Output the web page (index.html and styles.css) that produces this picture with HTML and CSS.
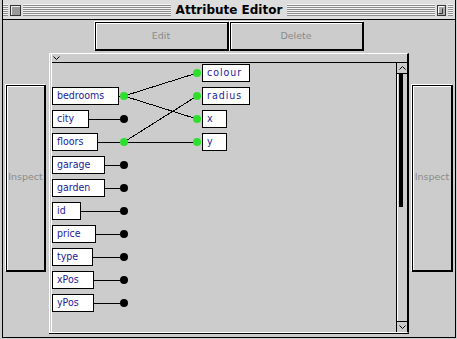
FILE: index.html
```html
<!DOCTYPE html>
<html lang="en">
<head>
  <meta charset="UTF-8" />
  <title>Attribute Editor</title>
  <link rel="stylesheet" href="styles.css">
</head>
<body>
  <div class="window">
    <div class="titlebar">
      <div class="stripes">
        <span class="close-box"></span>
        <span class="title">Attribute Editor</span>
        <span class="zoom-box">
          <svg width="9" height="11" viewBox="0 0 9 11">
            <rect x="0.5" y="0.5" width="8" height="10" fill="#aaa" stroke="#333" />
            <path d="M1.5 1.5 H7.5 M1.5 1.5 V9.5" stroke="#fff" />
            <path d="M1.5 8.5 H5.5 V3.5" stroke="#333" fill="none" />
          </svg>
        </span>
      </div>
    </div>

    <div class="toolbar">
      <button class="mac-btn tool-btn">Edit</button>
      <button class="mac-btn tool-btn">Delete</button>
    </div>

    <div class="main">
      <button class="mac-btn inspect">Inspect</button>

      <div class="canvas">
        <div class="canvas-head">
          <svg width="7" height="5" viewBox="0 0 7 5">
            <path d="M0.5 0.5 L3.5 3.5 L6.5 0.5" stroke="#000" fill="none" />
          </svg>
        </div>
        <div class="canvas-body">
          <div class="diagram">
            <svg class="links" width="150" height="100" viewBox="0 0 150 100">
              <path d="M72 33 L145 10 M72 33 L145 56 M72 79 L145 33 M72 79 L145 79" stroke="#000" fill="none" />
            </svg>

            <div class="col col-left">
              <div class="attr"><span class="node">bedrooms</span><span class="wire"></span><span class="dot on"></span></div>
              <div class="attr"><span class="node">city</span><span class="wire"></span><span class="dot"></span></div>
              <div class="attr"><span class="node">floors</span><span class="wire"></span><span class="dot on"></span></div>
              <div class="attr"><span class="node">garage</span><span class="wire"></span><span class="dot"></span></div>
              <div class="attr"><span class="node">garden</span><span class="wire"></span><span class="dot"></span></div>
              <div class="attr"><span class="node">id</span><span class="wire"></span><span class="dot"></span></div>
              <div class="attr"><span class="node">price</span><span class="wire"></span><span class="dot"></span></div>
              <div class="attr"><span class="node">type</span><span class="wire"></span><span class="dot"></span></div>
              <div class="attr"><span class="node">xPos</span><span class="wire"></span><span class="dot"></span></div>
              <div class="attr"><span class="node">yPos</span><span class="wire"></span><span class="dot"></span></div>
            </div>

            <div class="col col-right">
              <div class="attr"><span class="dot on"></span><span class="node wide">colour</span></div>
              <div class="attr"><span class="dot on"></span><span class="node wide">radius</span></div>
              <div class="attr"><span class="dot on"></span><span class="node narrow">x</span></div>
              <div class="attr"><span class="dot on"></span><span class="node narrow">y</span></div>
            </div>
          </div>

          <div class="scrollbar">
            <div class="arrow">
              <svg width="7" height="5" viewBox="0 0 7 5">
                <path d="M0.5 3.5 L3.5 0.5 L6.5 3.5" stroke="#000" fill="none" />
              </svg>
            </div>
            <div class="track"><div class="thumb"></div></div>
            <div class="arrow down">
              <svg width="7" height="5" viewBox="0 0 7 5">
                <path d="M0.5 0.5 L3.5 3.5 L6.5 0.5" stroke="#000" fill="none" />
              </svg>
            </div>
          </div>
        </div>
      </div>

      <button class="mac-btn inspect inspect-right">Inspect</button>
    </div>
  </div>
</body>
</html>
```

FILE: styles.css
```css
:root {
  --bg: #cccccc;
  --title-bg: #dddddd;
  --ink: #1c1c9c;
  --muted: #8a8a8a;
  --green: #2ee02e;
}

html, body {
  margin: 0;
  padding: 0;
  background: var(--bg);
  font-family: "DejaVu Sans", Verdana, sans-serif;
}

body {
  width: 457px;
  height: 339px;
  overflow: hidden;
}

.window {
  margin-left: 2px;
  width: 454px;
  height: 338px;
  box-sizing: border-box;
  border: 1px solid #000;
  border-top: none;
  background: var(--bg);
}

/* title bar */

.titlebar {
  height: 20px;
  box-sizing: border-box;
  border-bottom: 1px solid #000;
  background: var(--title-bg);
  padding: 4px 2px 0 0;
}

.stripes {
  display: flex;
  align-items: center;
  height: 12px;
  background: repeating-linear-gradient(to bottom, #f4f4f4 0 1px, #8c8c8c 1px 2px);
}

.close-box {
  margin-left: 7px;
  width: 11px;
  height: 11px;
  box-sizing: border-box;
  border: 1px solid #333;
  background: #999;
  box-shadow: 0 0 0 2px var(--title-bg), inset 1px 1px 0 #eee;
}

.title {
  margin: 0 auto;
  padding: 0 5px;
  background: var(--title-bg);
  font-weight: bold;
  font-size: 12px;
  line-height: 14px;
  color: #000;
}

.zoom-box {
  display: flex;
  margin-right: 7px;
  box-shadow: 0 0 0 2px var(--title-bg);
  background: var(--title-bg);
}

/* buttons */

.mac-btn {
  box-sizing: border-box;
  background: var(--bg);
  border: 1px solid #000;
  border-right-width: 2px;
  border-bottom-width: 2px;
  box-shadow: -1px -1px 0 #fff, inset 1px 1px 0 #fff;
  color: var(--muted);
  font-family: "DejaVu Sans", Verdana, sans-serif;
  font-size: 9.5px;
  padding: 0;
}

.toolbar {
  display: flex;
  justify-content: center;
  gap: 1px;
  margin-top: 2px;
}

.tool-btn {
  width: 134px;
  height: 29px;
  padding-bottom: 2px;
}

.main {
  display: flex;
  align-items: flex-start;
  margin-top: 2px;
  height: 281px;
  padding-left: 3px;
}

.inspect {
  width: 40px;
  height: 187px;
  margin-top: 32px;
  padding-bottom: 4px;
}

.inspect-right {
  width: 41px;
  margin-left: 3px;
}

/* diagram canvas */

.canvas {
  margin-left: 3px;
  width: 360px;
  height: 280px;
  box-sizing: border-box;
  border-left: 3px double #fff;
  border-top: 1px solid #fff;
  border-bottom: 1px solid #fff;
  border-right: 2px solid #000;
  box-shadow: 0 1px 0 #000;
  display: flex;
  flex-direction: column;
}

.canvas-head {
  height: 9px;
  box-sizing: border-box;
  border-bottom: 1px solid #000;
  padding: 2px 0 0 1px;
  display: flex;
  align-items: flex-start;
}

.canvas-body {
  flex: 1;
  display: flex;
}

.diagram {
  flex: 1;
  position: relative;
  display: flex;
  align-items: flex-start;
}

.links {
  position: absolute;
  left: 0;
  top: 0;
  shape-rendering: crispEdges;
}

.col {
  position: relative;
  display: flex;
  flex-direction: column;
  gap: 5px;
}

.col-left {
  width: 76px;
  margin-top: 24px;
}

.col-right {
  margin-left: 65px;
  margin-top: 1px;
}

.attr {
  display: flex;
  align-items: center;
  height: 18px;
}

.node {
  height: 18px;
  box-sizing: border-box;
  border: 1px solid #000;
  background: #fff;
  padding: 0 14px 0 4px;
  color: var(--ink);
  font-family: "DejaVu Sans Condensed", "DejaVu Sans", sans-serif;
  font-size: 10.5px;
  line-height: 15px;
  white-space: nowrap;
}

.node.wide {
  width: 48px;
  padding-right: 0;
  letter-spacing: 1px;
  margin-left: 1px;
}

.node.narrow {
  width: 25px;
  padding-right: 0;
  margin-left: 1px;
}

.wire {
  flex: 1;
  height: 1px;
  background: #000;
}

.dot {
  width: 8px;
  height: 8px;
  border-radius: 50%;
  background: #000;
  flex: none;
}

.dot.on {
  background: var(--green);
}

/* scrollbar */

.scrollbar {
  width: 11px;
  box-sizing: border-box;
  border-left: 1px solid #000;
  display: flex;
  flex-direction: column;
}

.arrow {
  height: 11px;
  box-sizing: border-box;
  border-bottom: 1px solid #000;
  display: flex;
  align-items: center;
  justify-content: center;
}

.arrow.down {
  border-bottom: none;
  border-top: 1px solid #000;
}

.track {
  flex: 1;
  border-left: 1px solid #fff;
  padding-left: 1px;
}

.thumb {
  width: 4px;
  height: 133px;
  background: #000;
}
```
